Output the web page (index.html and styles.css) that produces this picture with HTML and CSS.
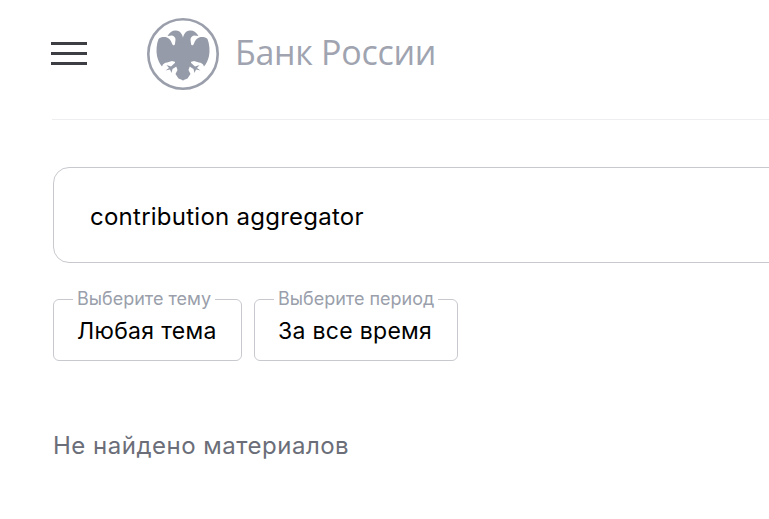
FILE: index.html
```html
<!DOCTYPE html>
<html lang="ru">
<head>
    <meta charset="UTF-8">
    <meta name="viewport" content="width=device-width, initial-scale=1.0">
    <title>Банк России</title>
    <link rel="stylesheet" href="styles.css">
</head>
<body>
    <header class="header">
        <div class="burger">
            <span></span>
            <span></span>
            <span></span>
        </div>
        <a class="logo" href="#">
            <svg class="logo-mark" viewBox="0 0 72 72" width="72" height="72">
                <circle cx="36" cy="36" r="34.7" fill="none" stroke="#9a9fab" stroke-width="2.6"/>
                <g id="half" fill="#959ba8">
                    <path d="M36.5 22C35.5 16 33.5 12.6 29 12.4C25.5 12.2 22.5 14 20.5 18L25 17.5C27 18 28.5 19.5 28.5 21.5L28 26L36.5 28Z"/>
                    <path d="M11.5 21C9.5 26 9 33 10 38C11 42 12.5 46 15 48.5C16 45.5 18 44.5 20 44.5L25 43L32 45L32 25L28.5 25C27.5 28 25.8 28 25 25.5C24 22.8 22.5 20.5 20 19.5C17 18.5 13.5 19 11.5 21Z"/>
                    <path d="M36.5 24L28 25L28 45L30.5 52L28.5 56L31.5 60.5L36.5 62.5Z"/>
                    <path d="M30 43L24 48.5L19.5 47L22 50L18.5 52.5L23 51.5L24.5 55L25.5 51L31 47.5Z"/>
                </g>
                <use href="#half" transform="translate(72 0) scale(-1 1)"/>
            </svg>
            <span class="logo-text">Банк России</span>
        </a>
    </header>

    <main class="content">
        <div class="search">contribution aggregator</div>

        <div class="filters">
            <fieldset class="filter filter-topic">
                <legend>Выберите тему</legend>
                <div class="filter-value">Любая тема</div>
            </fieldset>
            <fieldset class="filter filter-period">
                <legend>Выберите период</legend>
                <div class="filter-value">За все время</div>
            </fieldset>
        </div>

        <p class="empty">Не найдено материалов</p>
    </main>
</body>
</html>
```

FILE: styles.css
```css
html, body {
    margin: 0;
    padding: 0;
    height: 100%;
    overflow: hidden;
}
body {
    font-family: Inter, "Noto Sans", sans-serif;
    background-color: white;
    color: black;
    width: 1000px;
}
.header {
    display: flex;
    align-items: center;
    height: 119px;
    margin-left: 52px;
    border-bottom: 1px solid #eeeef0;
}
.burger {
    display: flex;
    flex-direction: column;
    gap: 7px;
    width: 36px;
    margin-left: -1px;
    margin-top: -13px;
}
.burger span {
    display: block;
    height: 3px;
    background-color: #3d3d44;
}
.logo {
    display: flex;
    align-items: center;
    gap: 16px;
    margin-left: 60px;
    margin-top: -11px;
    text-decoration: none;
}
.logo-mark {
    flex-shrink: 0;
}
.logo-text {
    font-family: "Open Sans", sans-serif;
    font-size: 34px;
    letter-spacing: -0.3px;
    margin-top: -4px;
    color: #9fa4b0;
}
.content {
    margin-left: 53px;
}
.search {
    box-sizing: border-box;
    height: 96px;
    margin-top: 47px;
    padding-left: 36px;
    padding-top: 3px;
    display: flex;
    align-items: center;
    font-size: 24px;
    letter-spacing: 0.25px;
    border: 1px solid #c8c9ce;
    border-radius: 16px;
}
.filters {
    display: flex;
    gap: 12px;
    margin-top: 26px;
}
.filter {
    box-sizing: border-box;
    height: 72px;
    margin: 0;
    padding: 0 19px 0 23px;
    border: 1px solid #c8c9ce;
    border-radius: 6px;
}
.filter-topic {
    width: 189px;
}
.filter-period {
    width: 204px;
}
.filter legend {
    padding: 0 4px;
    margin-left: -4px;
    font-size: 18px;
    line-height: 20px;
    white-space: nowrap;
    color: #9a9fab;
}
.filter-value {
    font-size: 23px;
    letter-spacing: 0.3px;
    line-height: 30px;
    margin-top: 7px;
}
.empty {
    margin: 70px 0 0;
    font-size: 24px;
    letter-spacing: 0.5px;
    color: #6b6e78;
}
```
